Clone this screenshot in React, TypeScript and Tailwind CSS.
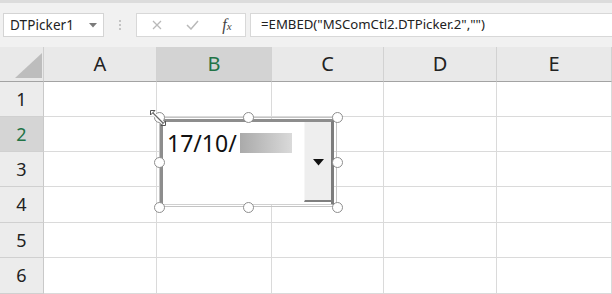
import React from "react";

const cols = ["A", "B", "C", "D", "E"];
const rows = [1, 2, 3, 4, 5, 6];
const font = { fontFamily: '"Noto Sans", "Open Sans", sans-serif' };

function Handle({ x, y }: { x: number; y: number }) {
  return (
    <div
      className="absolute w-[11px] h-[11px] rounded-full bg-white border-[1.5px] border-[#8e8e8e]"
      style={{ left: x - 5.5, top: y - 5.5 }}
    />
  );
}

export default function App() {
  return (
    <div className="w-[612px] h-[294px] overflow-hidden bg-white relative" style={font}>
      {/* toolbar */}
      <div className="h-[47px] bg-[#f1f1f1] border-t-[3px] border-[#dcdcdc] flex items-start pt-[10px]">
        <div className="ml-[3px] w-[101px] h-[24px] bg-white border border-[#d4d4d4] flex items-center pl-[6px] pr-[6px]">
          <span className="text-[13.5px] text-[#222] tracking-[0.1px] flex-1">DTPicker1</span>
          <svg width="8" height="5" viewBox="0 0 8 5"><path d="M0 0 L8 0 L4 4.5 Z" fill="#7a7a7a" /></svg>
        </div>
        <div className="w-[32px] h-[24px] flex flex-col items-center justify-center gap-[2px]">
          <div className="w-[2px] h-[2px] bg-[#c4c4c4]" />
          <div className="w-[2px] h-[2px] bg-[#c4c4c4]" />
          <div className="w-[2px] h-[2px] bg-[#c4c4c4]" />
        </div>
        <div className="w-[110px] h-[24px] bg-white border border-[#d8d8d8] flex items-center">
          <div className="w-[38px] flex justify-center pl-[2px]">
            <svg width="10" height="10" viewBox="0 0 10 10"><path d="M1 1 L9 9 M9 1 L1 9" stroke="#b9b9b9" strokeWidth="1.3" /></svg>
          </div>
          <div className="w-[34px] flex justify-center">
            <svg width="13" height="10" viewBox="0 0 13 10"><path d="M1 5 L5 9 L12 1" stroke="#b9b9b9" strokeWidth="1.5" fill="none" /></svg>
          </div>
          <div className="w-[36px] flex justify-center">
            <span className="text-[16px] leading-[16px] italic text-[#444]" style={{ fontFamily: '"Liberation Serif", serif' }}>f<span className="text-[11px]">x</span></span>
          </div>
        </div>
        <div className="ml-[4px] flex-1 h-[24px] bg-white border border-[#d8d8d8] border-r-0 flex items-center pl-[10px]">
          <span className="text-[13.2px] text-[#222] whitespace-nowrap">=EMBED("MSComCtl2.DTPicker.2","")</span>
        </div>
      </div>

      {/* grid */}
      <div className="grid grid-cols-[44px_113px_115px_112px_113px_115px] grid-rows-[35px_35px_35px_35px_36px_35px_36px]">
        <div className="bg-[#e9e9e9] border-b border-[#a3a3a3] border-r border-r-[#cfcfcf] relative">
          <svg className="absolute left-[15px] top-[6px]" width="27" height="25" viewBox="0 0 27 25">
            <path d="M27 0 L27 25 L0 25 Z" fill="#bdbdbd" />
          </svg>
        </div>
        {cols.map((c) => (
          <div
            key={c}
            className={`flex items-center justify-center border-b border-[#a3a3a3] border-r border-r-[#d2d2d2] text-[20px] ${
              c === "B" ? "bg-[#d3d3d3] text-[#217346]" : "bg-[#e9e9e9] text-[#222]"
            }`}
          >
            {c}
          </div>
        ))}
        {rows.map((r) => (
          <React.Fragment key={r}>
            <div
              className={`flex items-center justify-center border-b border-[#d0d0d0] border-r border-r-[#c9c9c9] text-[18px] ${
                r === 2 ? "bg-[#d5d5d5] text-[#217346]" : "bg-[#ececec] text-[#222]"
              }`}
            >
              {r}
            </div>
            {cols.map((c) => (
              <div key={c} className="border-b border-r border-[#dadada]" />
            ))}
          </React.Fragment>
        ))}
      </div>

      {/* embedded DTPicker control */}
      <div className="absolute left-[159px] top-[117px] w-[178px] h-[90px] border border-[#c4c4c4]" />
      <div className="absolute left-[160px] top-[119px] w-[174px] h-[86px] bg-white border-l-[3px] border-t-[3px] border-r-[3px] border-b border-l-[#8d8d8d] border-t-[#8d8d8d] border-r-[#7d7d7d] border-b-[#d0d0d0] flex">
        <div className="flex-1 pl-[4px] pt-[7px] flex items-start">
          <span className="text-[23px] leading-[28px] text-[#111]">17/10/</span>
          <div className="ml-[3px] mt-[4px] w-[52px] h-[20px] bg-gradient-to-r from-[#aaaaaa] to-[#dadada]" />
        </div>
        <div className="w-[27px] h-[80px] bg-[#eeeeee] border-l border-[#f6f6f6] border-b-[2px] border-b-[#7f7f7f] flex items-center justify-center pt-[2px]">
          <svg width="11" height="7" viewBox="0 0 11 7"><path d="M0 0 L11 0 L5.5 6.5 Z" fill="#111" /></svg>
        </div>
      </div>

      <Handle x={159} y={117} />
      <Handle x={248} y={117} />
      <Handle x={337} y={117} />
      <Handle x={159} y={162} />
      <Handle x={337} y={162} />
      <Handle x={159} y={207} />
      <Handle x={248} y={207} />
      <Handle x={337} y={207} />

      {/* resize cursor */}
      <svg className="absolute left-[149px] top-[109px]" width="18" height="18" viewBox="0 0 18 18">
        <path d="M3 3 L15 15" stroke="#ffffff" strokeWidth="3.5" />
        <path d="M3 3 L15 15" stroke="#6a6a6a" strokeWidth="1.2" />
        <path d="M1.5 1.5 L6 1.5 L1.5 6 Z" fill="#fff" stroke="#555" strokeWidth="1" />
        <path d="M16.5 16.5 L12 16.5 L16.5 12 Z" fill="#fff" stroke="#555" strokeWidth="1" />
      </svg>
    </div>
  );
}
